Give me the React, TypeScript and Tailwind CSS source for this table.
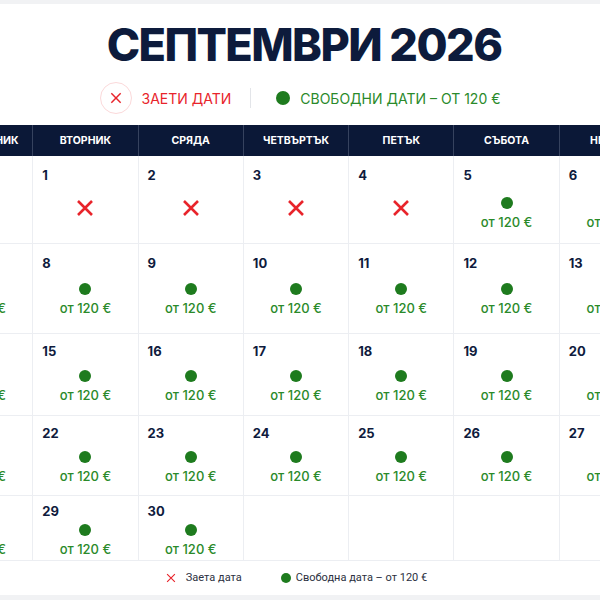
import React from "react";

const weekdays = ["ПОНЕДЕЛНИК", "ВТОРНИК", "СРЯДА", "ЧЕТВЪРТЪК", "ПЕТЪК", "СЪБОТА", "НЕДЕЛЯ"];

const weeks: (number | null)[][] = [
  [null, 1, 2, 3, 4, 5, 6],
  [7, 8, 9, 10, 11, 12, 13],
  [14, 15, 16, 17, 18, 19, 20],
  [21, 22, 23, 24, 25, 26, 27],
  [28, 29, 30, null, null, null, null],
];

const busy = [1, 2, 3, 4];

// row heights shrink a little towards the bottom, like the original
const rowStyles = [
  { h: "h-[88px]", pt: "pt-[11px]", mt: "mt-[13px]", xmt: "mt-[15px]" },
  { h: "h-[90px]", pt: "pt-[11px]", mt: "mt-[11px]", xmt: "mt-[15px]" },
  { h: "h-[82px]", pt: "pt-[9px]", mt: "mt-[10px]", xmt: "mt-[13px]" },
  { h: "h-[80px]", pt: "pt-[9px]", mt: "mt-[9px]", xmt: "mt-[12px]" },
  { h: "h-[65px]", pt: "pt-[7px]", mt: "mt-[4px]", xmt: "mt-[6px]" },
];

const Cross = ({ size, stroke }: { size: number; stroke: number }) => (
  <svg width={size} height={size} viewBox="0 0 18 18" fill="none">
    <path d="M2 2L16 16M16 2L2 16" stroke="#e8242b" strokeWidth={stroke} />
  </svg>
);

const App = () => {
  return (
    <div
      className="min-h-[600px] bg-[#f1f2f4] pt-[4px] pb-[5px] overflow-hidden"
      style={{ fontFamily: "Inter, 'Noto Sans', sans-serif" }}>
      <div className="bg-white h-[591px] flex flex-col items-center">
        {/* TITLE */}
        <h1 className="mt-[14px] ml-[8px] text-[45px] leading-[54px] font-extrabold tracking-[-0.035em] text-[#0d1b3c]">
          СЕПТЕМВРИ 2026
        </h1>

        {/* TOP LEGEND */}
        <div className="mt-[10px] flex items-center">
          <div className="w-[32px] h-[32px] rounded-full border border-[#fbd9da] flex items-center justify-center">
            <Cross size={12} stroke={2.2} />
          </div>
          <span className="ml-[10px] text-[14px] text-[#e8242b]">ЗАЕТИ ДАТИ</span>
          <div className="ml-[19px] w-px h-[20px] bg-[#e3e5e9]" />
          <div className="ml-[25px] w-[14px] h-[14px] rounded-full bg-[#1e7b1e]" />
          <span className="ml-[10px] text-[14px] text-[#2a8a2a]">СВОБОДНИ ДАТИ – ОТ 120 €</span>
        </div>

        {/* CALENDAR */}
        <div className="mt-[11px] w-[737px] self-start ml-[-72px]">
          <div className="grid grid-cols-7 bg-[#0b1837] h-[31px]">
            {weekdays.map((day, i) => (
              <div
                key={day}
                className={`flex items-center justify-center text-[10.5px] font-bold text-white ${i < 6 ? "border-r border-[#36425e]" : ""}`}>
                {day}
              </div>
            ))}
          </div>

          {weeks.map((week, r) => (
            <div key={r} className="grid grid-cols-7">
              {week.map((d, c) => (
                <div
                  key={c}
                  className={`${rowStyles[r].h} ${rowStyles[r].pt} px-[9px] flex flex-col border-b border-[#eceef2] ${c < 6 ? "border-r" : ""}`}>
                  {d !== null && (
                    <>
                      <span className="text-[13px] leading-[17px] font-bold text-[#0f1b3d]">{d}</span>
                      {busy.includes(d) ? (
                        <div className={`${rowStyles[r].xmt} flex justify-center`}>
                          <Cross size={18} stroke={2.6} />
                        </div>
                      ) : (
                        <div className={`${rowStyles[r].mt} flex flex-col items-center`}>
                          <div className="w-[12px] h-[12px] rounded-full bg-[#1e7b1e]" />
                          <span className="mt-[5px] text-[13px] leading-[16px] font-medium text-[#2a8a2a]">
                            от 120 €
                          </span>
                        </div>
                      )}
                    </>
                  )}
                </div>
              ))}
            </div>
          ))}

          {/* BOTTOM LEGEND */}
          <div
            className="h-[34px] flex items-center justify-center text-[11px] text-[#2b3040]"
            style={{ fontFamily: "Roboto, 'Noto Sans', sans-serif" }}>
            <Cross size={10} stroke={2} />
            <span className="ml-[10px]">Заета дата</span>
            <div className="ml-[39px] w-[10px] h-[10px] rounded-full bg-[#1e7b1e]" />
            <span className="ml-[5px]">Свободна дата – от 120 €</span>
          </div>
        </div>
      </div>
    </div>
  );
};

export default App;
